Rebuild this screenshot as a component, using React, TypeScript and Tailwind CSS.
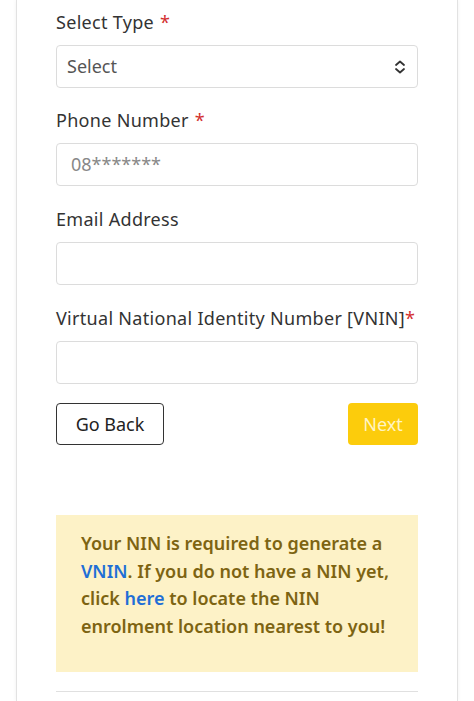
import React from "react";

const Label = ({ children, req, tight }: { children: React.ReactNode; req?: boolean; tight?: boolean }) => (
  <div className="text-[18px] leading-[26px] text-[#333333] mb-[10px] tracking-[0.3px]">
    {children}
    {req && <span className={`text-[#d32f2f] ${tight ? "" : "ml-[6px]"}`}>*</span>}
  </div>
);

export default function App() {
  return (
    <div className="min-h-screen bg-white flex justify-center" style={{ fontFamily: '"Noto Sans", sans-serif' }}>
      <div className="w-[442px] min-h-[701px] border-x border-[#e2e2e2] shadow-[0_0_4px_rgba(0,0,0,0.06)] px-[39px] pt-[9px]">
        <div className="mb-[19px]">
          <Label req>Select Type</Label>
          <div className="h-[43px] border border-[#dcdcdc] rounded-[4px] flex items-center justify-between pl-[10px] pr-[10px]">
            <span className="text-[18px] text-[#555555]">Select</span>
            <svg width="14" height="16" viewBox="0 0 14 16" fill="none" stroke="#333" strokeWidth="1.8" strokeLinecap="round" strokeLinejoin="round">
              <path d="M3 6 L7 2.5 L11 6" />
              <path d="M3 10 L7 13.5 L11 10" />
            </svg>
          </div>
        </div>
        <div className="mb-[20px]">
          <Label req>Phone Number</Label>
          <div className="h-[43px] border border-[#dcdcdc] rounded-[4px] flex items-center pl-[14px]">
            <span className="text-[18px] text-[#888888]">08*******</span>
          </div>
        </div>
        <div className="mb-[20px]">
          <Label>Email Address</Label>
          <div className="h-[43px] border border-[#dcdcdc] rounded-[4px]" />
        </div>
        <div className="mb-[19px]">
          <Label req tight>Virtual National Identity Number [VNIN]</Label>
          <div className="h-[43px] border border-[#dcdcdc] rounded-[4px]" />
        </div>
        <div className="flex justify-between">
          <div className="w-[108px] h-[42px] border border-[#333333] rounded-[4px] flex items-center justify-center text-[18px] text-[#222222]">
            Go Back
          </div>
          <div className="w-[70px] h-[42px] bg-[#fccc0c] rounded-[4px] flex items-center justify-center text-[18px] text-[#fff4c4]">
            Next
          </div>
        </div>
        <div className="mt-[70px] bg-[#fdf2c7] h-[157px] pl-[25px] pr-[20px] pt-[15px]">
          <div className="text-[18px] leading-[27.5px] font-semibold text-[#7d6412]">
            <div>Your NIN is required to generate a</div>
            <div>
              <span className="text-[#1f6fd6]">VNIN</span>
              <span>. If you do not have a NIN yet,</span>
            </div>
            <div>
              <span>click </span>
              <span className="text-[#1f6fd6]">here</span>
              <span> to locate the NIN</span>
            </div>
            <div>enrolment location nearest to you!</div>
          </div>
        </div>
        <div className="mt-[19px] border-t border-[#e0e0e0]" />
      </div>
    </div>
  );
}
